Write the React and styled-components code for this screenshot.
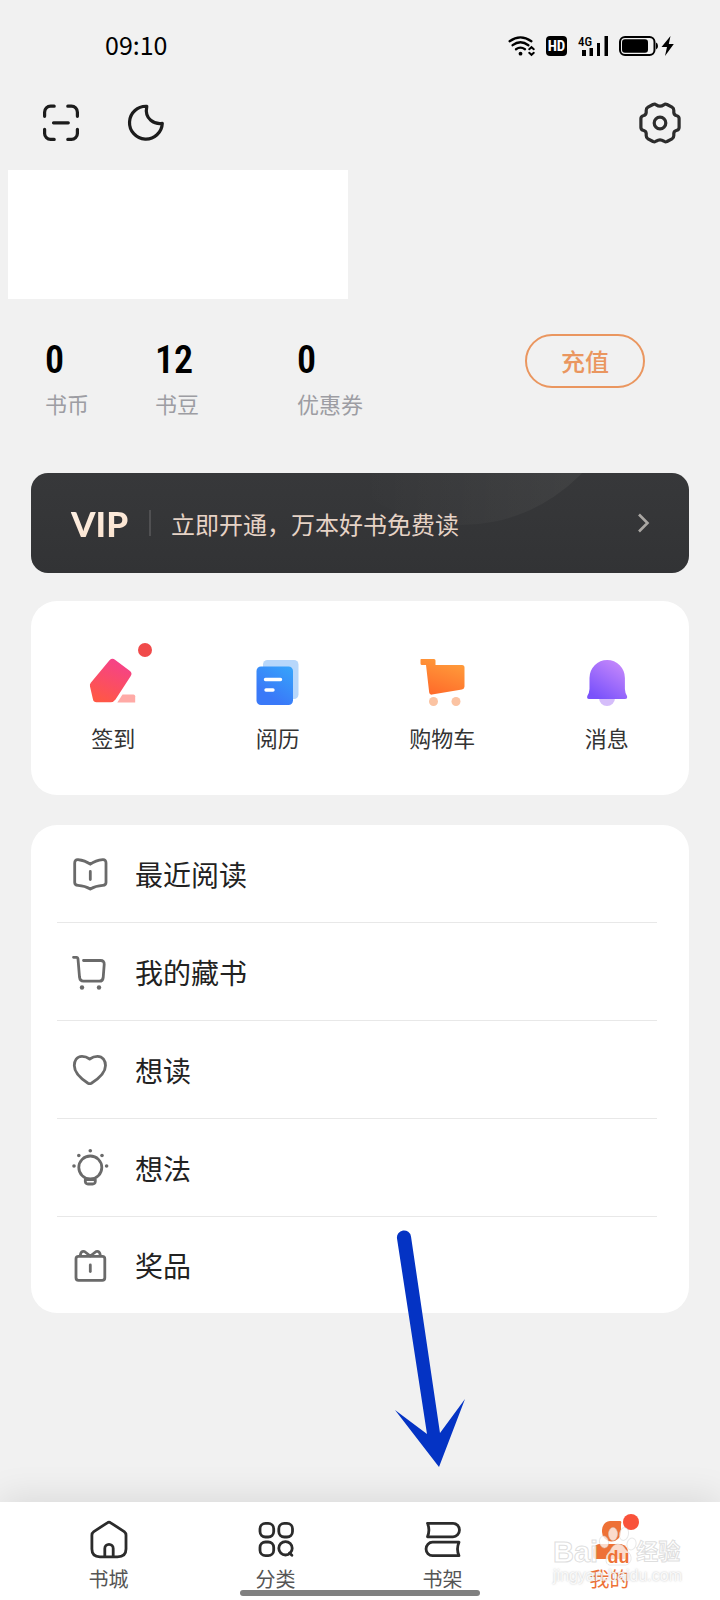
import styled, { createGlobalStyle } from "styled-components";

const GlobalStyle = createGlobalStyle`
  * {
    box-sizing: border-box;
  }
  body {
    margin: 0;
    background: #f1f1f1;
    color: #222;
    font-family: "Noto Sans CJK SC", sans-serif;
    font-weight: 400;
  }
  button {
    padding: 0;
    border: 0;
    background: none;
    color: inherit;
    font: inherit;
    cursor: pointer;
  }
  a {
    color: inherit;
    text-decoration: none;
  }
  svg {
    display: block;
    overflow: visible;
  }
`;

const Page = styled.div`
  min-height: 100vh;
  display: flex;
  flex-direction: column;
`;

const StatusBar = styled.div`
  height: 92px;
  padding: 0 46px 0 105px;
  display: flex;
  align-items: center;
  justify-content: space-between;
  color: #000;
  font-size: 25px;

  > span {
    padding-bottom: 4px;
  }
`;

const StatusIcons = styled.div`
  display: flex;
  align-items: center;
  gap: 11px;
`;

const HdBadge = styled.span`
  width: 21px;
  height: 20px;
  border-radius: 4px;
  background: #000;
  color: #fff;
  font: 700 15px/21px "Roboto Condensed", Roboto, sans-serif;
  text-align: center;
`;

const Signal = styled.div`
  position: relative;

  > span {
    position: absolute;
    top: -1px;
    left: 0;
    font: 500 13px/13px "Roboto Condensed", Roboto, sans-serif;
  }
`;

const Toolbar = styled.header`
  height: 62px;
  padding: 0 39px 0 41px;
  display: flex;
  align-items: center;
  gap: 48px;

  > :last-child {
    margin-left: auto;
  }
`;

const Profile = styled.div`
  width: 340px;
  height: 129px;
  margin: 16px 0 0 8px;
  background: #fff;
`;

const Assets = styled.section`
  margin-top: 35px;
  padding: 0 75px 0 45px;
  display: flex;
  justify-content: space-between;
  align-items: flex-start;
`;

const AssetList = styled.div`
  display: grid;
  grid-template-columns: 110px 142px auto;
`;

const Asset = styled.div`
  > strong {
    display: block;
    color: #000;
    font: 600 38px/52px "Roboto Condensed", "Liberation Sans Narrow", Roboto,
      sans-serif;
  }
  > span {
    display: block;
    color: #9d9da3;
    font-size: 22px;
    line-height: 34px;
  }
`;

const Recharge = styled.button`
  && {
    width: 120px;
    height: 54px;
    border: 2px solid #ea965f;
    border-radius: 27px;
    color: #ea965f;
    font-size: 24px;
    line-height: 50px;
    font-weight: 500;
  }
`;

const VipBanner = styled.a`
  position: relative;
  overflow: hidden;
  height: 100px;
  margin: 53px 31px 0;
  padding: 0 40px;
  border-radius: 17px;
  background: linear-gradient(180deg, #37383a, #323335);
  display: flex;
  align-items: center;
  color: #e6d3c6;
  font-size: 24px;

  &::before {
    content: "";
    position: absolute;
    top: -282px;
    left: 263px;
    width: 334px;
    height: 334px;
    border-radius: 50%;
    background: linear-gradient(
      90deg,
      transparent 20%,
      rgba(255, 255, 240, 0.06)
    );
  }
  > b {
    width: 78px;
    background: linear-gradient(160deg, #fff3e8, #f8dcc4);
    background-clip: text;
    color: transparent;
    font: 900 35px/40px Lato, sans-serif;
  }
  > span {
    padding-left: 20px;
    position: relative;
  }
  > svg {
    margin-left: auto;
  }
`;

const Divider = styled.i`
  width: 2px;
  height: 26px;
  background: #505052;
`;

const Card = styled.section`
  margin: ${(props) => props.$top}px 31px 0;
  border-radius: 26px;
  background: #fff;
`;

const Shortcuts = styled.div`
  height: 194px;
  padding-top: 55px;
  display: grid;
  grid-template-columns: repeat(4, 1fr);
  align-items: start;
`;

const Shortcut = styled.button`
  && {
    display: flex;
    flex-direction: column;
    align-items: center;
    gap: 13px;
    color: #333;
    font-size: 22px;
    line-height: 36px;
  }
`;

const IconBox = styled.span`
  position: relative;
`;

const Dot = styled.i`
  position: absolute;
  top: ${(props) => props.$top}px;
  right: ${(props) => props.$right}px;
  width: ${(props) => props.$size}px;
  height: ${(props) => props.$size}px;
  border-radius: 50%;
  background: ${(props) => props.$color};
`;

const MenuList = styled.nav`
  padding: 0 32px 0 26px;
`;

const MenuItem = styled.a`
  height: 98px;
  padding-left: 14px;
  border-bottom: 1px solid #e8e8e8;
  display: flex;
  align-items: center;
  gap: 26px;
  font-size: 28px;
  line-height: 38px;
  color: #222;

  &:last-child {
    height: 96px;
    border-bottom: 0;
  }
`;

const TabBar = styled.nav`
  position: relative;
  height: 98px;
  margin-top: auto;
  padding: 17px 27px 0 25px;
  background: #fff;
  box-shadow: 0 -4px 36px rgba(0, 0, 0, 0.1);
  display: grid;
  grid-template-columns: repeat(4, 1fr);
  align-items: start;
`;

const Tab = styled.button`
  && {
    position: relative;
    display: flex;
    flex-direction: column;
    align-items: center;
    gap: 5px;
    color: ${(props) => (props.$active ? "#ee7136" : "#555")};
    font-size: 20px;
    line-height: 30px;
  }
`;

const HomeIndicator = styled.div`
  position: absolute;
  left: 50%;
  bottom: 4px;
  width: 240px;
  height: 6px;
  margin-left: -120px;
  border-radius: 3px;
  background: #808080;
`;

const Pointer = styled.svg`
  position: absolute;
  left: 35px;
  bottom: 126px;
  pointer-events: none;
`;

const Watermark = styled.div`
  position: absolute;
  right: 38px;
  bottom: 15px;
  pointer-events: none;
  font-family: "Liberation Sans", "Noto Sans CJK SC", sans-serif;
  color: rgba(255, 255, 255, 0.85);
  -webkit-text-stroke: 1px rgba(200, 200, 200, 0.6);

  > div {
    display: flex;
    align-items: flex-end;
    font-size: 29px;
    line-height: 30px;
    font-weight: 700;
  }
  > div > span:last-child {
    font-size: 22px;
  }
  > small {
    display: block;
    font-size: 16px;
    line-height: 18px;
    -webkit-text-stroke: 0;
    text-shadow: 0 0 2px rgba(150, 150, 150, 0.6);
  }
`;

const Stroke = ({ size = 38, top = 0, color = "#6a6a6a", width = 2.8, children }) => (
  <svg
    width={size}
    height={size}
    viewBox={`0 ${top} ${size} ${size}`}
    fill="none"
    stroke={color}
    strokeWidth={width}
    strokeLinecap="round"
    strokeLinejoin="round"
    aria-hidden="true"
  >
    {children}
  </svg>
);

const WifiIcon = () => (
  <svg width="27" height="20" viewBox="0 0 27 20" fill="none" stroke="#000" strokeWidth="2.3" strokeLinecap="round">
    <path d="M1.6 5.2Q12.4-2.4 23.4 5.2M4.6 9.2Q12.4 3.4 20.4 9.2M8 13.2Q12.4 10 17 13.2" />
    <circle cx="12.5" cy="17.7" r="1.9" fill="#000" stroke="none" />
    <path d="M21.2 13.2l2.300-2 2.300 2M21.2 16.800l2.300 2 2.300-2" strokeWidth="2" />
  </svg>
);

const SignalIcon = () => (
  <svg width="30" height="20" viewBox="0 0 30 20">
    <path d="M4 14h4v6H4zM11.5 12h3.5v8h-3.5zM19 7h3v13h-3zM26.5 0h3.5v20h-3.5z" />
  </svg>
);

const BatteryIcon = () => (
  <svg width="55" height="20" viewBox="0 0 55 20">
    <rect x="1" y="1" width="34.5" height="18" rx="5" fill="none" stroke="#000" strokeWidth="2" />
    <rect x="3" y="3.2" width="26" height="13.6" rx="3" />
    <path d="M37 6.5q2 .5 2 3.5t-2 3.5z" />
    <path d="M51.5 0L42.5 11h5.5l-2 9L54.8 8h-5z" />
  </svg>
);

const ScanIcon = () => (
  <Stroke size={38} color="#1c1c1c" width={3.2}>
    <path d="M3.600 12.300V8.200a6 6 0 0 1 6-6h3.600M26.800 2.200h3.600a6 6 0 0 1 6 6v4.100M36.400 25.300v4.100a6 6 0 0 1-6 6h-3.600M13.200 35.400H9.600a6 6 0 0 1-6-6v-4.100M12.500 18.800h14.800" />
  </Stroke>
);

const MoonIcon = () => (
  <Stroke size={38} color="#1c1c1c" width={3.2}>
    <path d="M19.800 2.300A16.400 16.400 0 1 0 35.300 19.400C28 20.500 17 15.500 19.800 2.300Z" />
  </Stroke>
);

const GearIcon = () => (
  <Stroke size={42} color="#2c2c2c" width={3.2}>
    <path d="M14 2.500Q15.900 1.700 17.200 2.900Q21 5.400 24.800 2.900Q26.100 1.700 28 2.500L33 5.200Q34.900 6.300 34.800 8.500V10.500Q35 12.800 37.200 13.500Q40.100 14.200 40.100 16.500V25.500Q40.100 27.800 37.200 28.500Q35 29.200 34.800 31.500V33.500Q34.900 35.700 33 36.800L28 39.500Q26.100 40.300 24.800 39.100Q21 36.600 17.200 39.100Q15.900 40.300 14 39.500L9 36.800Q7.100 35.700 7.200 33.500V31.500Q7 29.200 4.800 28.500Q1.900 27.800 1.900 25.500V16.500Q1.900 14.200 4.800 13.500Q7 12.800 7.200 10.500V8.500Q7.100 6.300 9 5.200Z" />
    <circle cx="21" cy="21" r="5.800" />
  </Stroke>
);

const SignIcon = () => (
  <svg width="48" height="50" viewBox="0 0 48 50">
    <linearGradient id="sign" x1="0.7" y1="0" x2="0.3" y2="1">
      <stop offset="0" stopColor="#f5418c" />
      <stop offset="1" stopColor="#ff5745" />
    </linearGradient>
    <path d="M20.500 4.200Q23.200 1.800 26 3.700L41 15Q43.700 17.300 41.600 20.300L26.500 43.500Q24.500 46.300 21.500 46.300H7.500Q4.500 46.300 4 43.600L1 30.500Q.5 28.500 1.800 26.800Z" fill="url(#sign)" />
    <path d="M33.500 38.500H44.500Q46.200 38.500 46.200 40.200V46.500H28.300Z" fill="#ffaaa6" />
  </svg>
);

const HistoryIcon = () => (
  <svg width="48" height="50" viewBox="0 0 48 50">
    <linearGradient id="history" x1="0.9" y1="0" x2="0.4" y2="0.8">
      <stop offset="0" stopColor="#36a3fb" />
      <stop offset="1" stopColor="#3a79f8" />
    </linearGradient>
    <rect x="9" y="4" width="35.500" height="39" rx="4.500" fill="#b7d7fb" />
    <rect x="2.500" y="10.500" width="36.500" height="38.500" rx="4.500" fill="url(#history)" />
    <path d="M11.500 23.500h15M12 34h7" stroke="#fff" strokeWidth="3.400" strokeLinecap="round" />
  </svg>
);

const ShopIcon = () => (
  <svg width="48" height="50" viewBox="0 0 48 50">
    <linearGradient id="shop" x1="0.7" y1="0" x2="0.3" y2="1">
      <stop offset="0" stopColor="#ff9d3b" />
      <stop offset="1" stopColor="#ff6b2a" />
    </linearGradient>
    <path d="M3 3H16Q17.500 3 17.500 4.500V9H44Q46.500 9 46.500 11.500V30.500Q46.500 33 44 33.400L14 38.600Q11.500 39 11.200 36.500L8 9H4Q2.500 9 2.500 7.500V3.500Z" fill="url(#shop)" />
    <circle cx="15.500" cy="45.500" r="4.500" fill="#fbc3a2" />
    <circle cx="38" cy="45.500" r="4.500" fill="#fbc3a2" />
  </svg>
);

const BellIcon = () => (
  <svg width="48" height="50" viewBox="0 0 48 50">
    <linearGradient id="bell" x1="0.9" y1="0.1" x2="0.3" y2="1">
      <stop offset="0" stopColor="#c588fb" />
      <stop offset="1" stopColor="#7a52fb" />
    </linearGradient>
    <path d="M16 42h16a8 8 0 0 1-16 0z" fill="#d5bdfa" />
    <path d="M6.500 22a17.700 18 0 0 1 35.400 0V33Q42 36.500 44 40Q44.800 43 42 43H6Q3.500 43 4.300 40Q6.400 36.500 6.500 33Z" fill="url(#bell)" />
  </svg>
);

const BookIcon = () => (
  <Stroke top={-1}>
    <path d="M19.300 8.200Q14 4.400 7 3.700Q3.700 3.500 3.700 7V26.500Q3.700 29.200 7 29.400Q14 29.800 19.300 33Q24.600 29.800 31.800 29.400Q35 29.200 35 26.500V7Q35 3.500 31.800 3.700Q24.600 4.400 19.300 8.200ZM19.300 15.500V23.500" />
  </Stroke>
);

const CartIcon = () => (
  <Stroke top={-1}>
    <path d="M2.500 3.300H5.500Q6.800 3.300 7 5L8.500 23Q9 27.200 12.500 27.200H28.500Q31.800 27.200 32.200 23.500L33.200 10.500Q33.400 6.500 29.500 6.500H12.500" />
    <g fill="#6a6a6a" stroke="none">
      <circle cx="11" cy="33.500" r="2.200" />
      <circle cx="28" cy="33.500" r="2.200" />
    </g>
  </Stroke>
);

const HeartIcon = () => (
  <Stroke top={-1}>
    <path d="M18.700 7Q15 4.300 11 4.300C5.500 4.300 3.300 9 3.300 13.500C3.300 21 12 28 17 31.200Q18.700 32.200 20.400 31.200C25.500 28 34.500 21 34.500 13.500C34.500 9 31.800 4.300 26.500 4.300Q22.500 4.300 18.700 7Z" />
  </Stroke>
);

const BulbIcon = () => (
  <Stroke top={-1}>
    <circle cx="19.300" cy="17.500" r="11.500" />
    <path d="M14.300 29.500V31.500Q14.500 34 17 34H21.600Q24.100 34 24.300 31.500V29.500Z" />
    <g fill="#6a6a6a" stroke="none">
      <circle cx="19.300" cy="0.800" r="1.800" />
      <circle cx="7.800" cy="5.500" r="1.800" />
      <circle cx="31" cy="5.500" r="1.800" />
      <circle cx="3" cy="16" r="1.800" />
      <circle cx="35.600" cy="16" r="1.800" />
    </g>
  </Stroke>
);

const GiftIcon = () => (
  <Stroke top={-1}>
    <rect x="5" y="9.300" width="28.800" height="24" rx="2.500" />
    <path d="M19.300 18V24.500" />
    <path d="M19.300 9L13.500 4.500Q9.800 3.500 9.300 8.500M19.300 9L25.100 4.500Q28.800 3.500 29.300 8.500" />
  </Stroke>
);

const HouseIcon = () => (
  <Stroke size={40} color="#2b2b2b">
    <path d="M18.300 3.800Q20 2.500 21.700 3.800L35.200 12.600Q37 14 37 16.200V30Q37 37.800 28.500 37.800H11Q2.900 37.800 2.900 30V16.200Q2.900 14 4.800 12.600ZM15.800 37.500V29.500a4.200 4.200 0 0 1 8.400 0V37.500" />
  </Stroke>
);

const CategoryIcon = () => (
  <Stroke size={40} color="#2b2b2b">
    <rect x="4" y="4.300" width="13.700" height="13.700" rx="5.500" />
    <rect x="22.800" y="4.300" width="13.700" height="13.700" rx="5.500" />
    <rect x="4" y="23" width="13.700" height="13.700" rx="5.500" />
    <circle cx="29.500" cy="29.300" r="6.700" />
    <path d="M33.500 34l2.400 2.300" />
  </Stroke>
);

const ShelfIcon = () => (
  <Stroke size={40} color="#2b2b2b">
    <path d="M4.500 4.300H30a6.400 6.700 0 0 1 0 13.500H4.500Q7.300 11 4.500 4.300ZM36 23.200H9.500a6.400 6.700 0 0 0 0 13.500H36Q33 30 36 23.200Z" />
  </Stroke>
);

const MineIcon = () => (
  <svg width="40" height="40" viewBox="0 0 40 40" fill="#ee7136" aria-hidden="true">
    <path d="M20 2H30Q32 2 31 5V13a9.500 9.500 0 0 1-19 0V11Q13 2.500 20 2Z" />
    <path d="M9 25H31Q38 27 38 33V37Q38 40 35 40H6Q3 40 3 37V31Q4 26 9 25Z" />
  </svg>
);

const Paw = () => (
  <svg width="38" height="42" viewBox="0 0 38 42" strokeWidth="1">
    <g fill="rgba(255,255,255,.75)" stroke="rgba(205,205,205,.45)">
      <ellipse cx="6" cy="17" rx="4.500" ry="6" transform="rotate(-12 6 17)" />
      <ellipse cx="15" cy="9" rx="4.500" ry="6.500" />
      <ellipse cx="26" cy="9" rx="4.500" ry="6.500" transform="rotate(12 26 9)" />
      <ellipse cx="33.500" cy="19" rx="4.500" ry="6" transform="rotate(14 33.500 19)" />
      <path d="M20 19Q25 19 28 25Q34 29 33 35Q31 41 25 40H14Q9 41 8 36Q7 30 12 26Q15 19 20 19Z" />
    </g>
    <text x="20.500" y="38" textAnchor="middle" fontSize="18" fontWeight="700" fill="#ee7136" stroke="none">
      du
    </text>
  </svg>
);

const shortcuts = [
  { label: "签到", icon: <SignIcon />, dot: true },
  { label: "阅历", icon: <HistoryIcon /> },
  { label: "购物车", icon: <ShopIcon /> },
  { label: "消息", icon: <BellIcon /> },
];

const menus = [
  { label: "最近阅读", icon: <BookIcon /> },
  { label: "我的藏书", icon: <CartIcon /> },
  { label: "想读", icon: <HeartIcon /> },
  { label: "想法", icon: <BulbIcon /> },
  { label: "奖品", icon: <GiftIcon /> },
];

const App = () => {
  return (
    <>
      <GlobalStyle />
      <Page>
        <StatusBar>
          <span>09:10</span>
          <StatusIcons>
            <WifiIcon />
            <HdBadge>HD</HdBadge>
            <Signal>
              <span>4G</span>
              <SignalIcon />
            </Signal>
            <BatteryIcon />
          </StatusIcons>
        </StatusBar>

        <Toolbar>
          <button aria-label="扫一扫">
            <ScanIcon />
          </button>
          <button aria-label="夜间模式">
            <MoonIcon />
          </button>
          <button aria-label="设置">
            <GearIcon />
          </button>
        </Toolbar>

        <Profile />

        <Assets>
          <AssetList>
            <Asset>
              <strong>0</strong>
              <span>书币</span>
            </Asset>
            <Asset>
              <strong>12</strong>
              <span>书豆</span>
            </Asset>
            <Asset>
              <strong>0</strong>
              <span>优惠券</span>
            </Asset>
          </AssetList>
          <Recharge>充值</Recharge>
        </Assets>

        <VipBanner href="#vip">
          <b>VIP</b>
          <Divider />
          <span>立即开通，万本好书免费读</span>
          <svg width="12" height="20" viewBox="0 0 12 20" fill="none" stroke="#aaa7a3" strokeWidth="2.600">
            <path d="M2 1.500L10.500 10L2 18.500" />
          </svg>
        </VipBanner>

        <Card $top={28}>
          <Shortcuts>
            {shortcuts.map((item) => (
              <Shortcut key={item.label}>
                <IconBox>
                  {item.icon}
                  {item.dot && <Dot $top={-13} $right={-15} $size={14} $color="#f04a4a" />}
                </IconBox>
                {item.label}
              </Shortcut>
            ))}
          </Shortcuts>
        </Card>

        <Card $top={30}>
          <MenuList>
            {menus.map((item) => (
              <MenuItem key={item.label} href="#menu">
                {item.icon}
                {item.label}
              </MenuItem>
            ))}
          </MenuList>
        </Card>

        <TabBar>
          <Tab>
            <HouseIcon />
            书城
          </Tab>
          <Tab>
            <CategoryIcon />
            分类
          </Tab>
          <Tab>
            <ShelfIcon />
            书架
            <Pointer width="74" height="238" viewBox="0 0 74 238" fill="#0433c4">
              <path d="M3 8.500A7 7 0 0 1 17 6.500L46 203L71 169L45 237L1 180L33 204Z" />
            </Pointer>
          </Tab>
          <Tab $active>
            <IconBox>
              <MineIcon />
              <Dot $top={-5} $right={-9} $size={16} $color="#f9523a" />
            </IconBox>
            我的
          </Tab>
          <HomeIndicator />
          <Watermark>
            <div>
              <span>Bai</span>
              <Paw />
              <span>经验</span>
            </div>
            <small>jingyan.baidu.com</small>
          </Watermark>
        </TabBar>
      </Page>
    </>
  );
};

export default App;
